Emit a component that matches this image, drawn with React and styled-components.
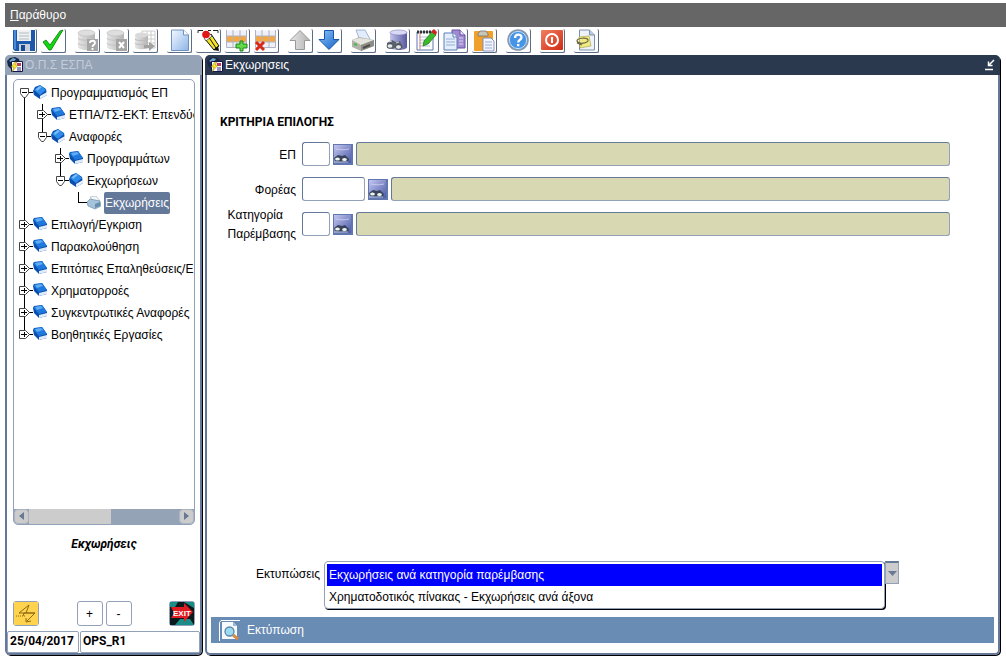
import React, { useState } from 'react';
import styled, { createGlobalStyle, css } from 'styled-components';

const Colors = {
  MENU: '#666666',
  FRAME: '#66789a',
  FRAME_LIGHT: '#92a1b7',
  TITLE: '#2a394e',
  TITLE_INACTIVE: '#95a3b7',
  FIELD: '#d8d9b3',
  ACTIONS: '#698cb4',
  SELECTED: '#64789a',
  BLUE: '#0000ff'
};

const FontSizes = {
  NORMAL: '12px'
};

const boldText = css`
  font-family: Roboto, 'Noto Sans', sans-serif;
  font-weight: bold;
`;

const GlobalStyle = createGlobalStyle`
  * { box-sizing: border-box; }

  body {
    margin: 0;
    background: #fff;
    color: #000;
  }

  body, button, input, select {
    font-family: 'Liberation Sans', Arial, sans-serif;
    font-size: ${FontSizes.NORMAL};
  }
`;

const Page = styled.div`
  display: flex;
  flex-direction: column;
  min-height: 100vh;
  padding: 3px 0 3px 5px;
`;

const MenuBar = styled.nav`
  display: flex;
  align-items: center;
  height: 24px;
  padding: 0 5px;
  background: ${Colors.MENU};
`;

const MenuLink = styled.a`
  color: #fff;
  text-decoration: none;

  &::first-letter { text-decoration: underline; }
`;

const Toolbar = styled.div`
  display: flex;
  gap: 9px;
  height: 28px;
  padding: 2px 7px;
`;

const ToolGroup = styled.div`
  display: flex;
  gap: 4px;
`;

const ToolButton = styled.button`
  display: block;
  width: 25px;
  height: 24px;
  padding: 0;
  border: 1px solid #5b6c85;
  border-width: 0 1px 1px 0;
  border-radius: 2px;
  background: #fff;

  svg { display: block; }
`;

const Desktop = styled.main`
  display: flex;
  flex: 1;
  gap: 3px;
  padding-right: 6px;
`;

const Window = styled.section`
  display: flex;
  flex-direction: column;
  border: 2px solid ${Colors.FRAME};
  border-top-width: 0;
  border-radius: 5px;
  box-shadow: 1px 1px 0 #000;
`;

const SideWindow = styled(Window)`
  width: 197px;
  flex-shrink: 0;
`;

const MainWindow = styled(Window)`
  flex: 1;
  min-width: 0;
`;

const TitleBar = styled.header`
  display: flex;
  align-items: center;
  gap: 1px;
  height: 20px;
  margin: 0 -2px;
  padding: 0 4px 0 2px;
  border-radius: 5px 5px 0 0;
  background: ${({ $active }) => ($active ? Colors.TITLE : Colors.TITLE_INACTIVE)};
  color: ${({ $active }) => ($active ? '#fff' : '#c3ccd7')};
`;

const Title = styled.h1`
  flex: 1;
  margin: 0;
  font-size: ${FontSizes.NORMAL};
  font-weight: normal;
`;

const PlainButton = styled.button`
  padding: 0;
  border: 0;
  background: none;
  line-height: 0;
`;

const SideBody = styled.div`
  display: flex;
  flex-direction: column;
  flex: 1;
  padding: 4px 5px 5px 6px;
`;

const TreeBox = styled.div`
  display: flex;
  flex-direction: column;
  flex: 1;
  border: 1px solid ${Colors.FRAME_LIGHT};
  border-radius: 5px;
  overflow: hidden;
`;

const TreeScroll = styled.div`
  flex: 1;
  padding: 2px 0 0 4px;
  overflow: hidden;
`;

const Branch = styled.ul`
  margin: 0;
  padding: 0;
  list-style: none;

  & & { padding-left: 18px; }
`;

const guides = {
  first: '6px 11px / 1px 100%',
  middle: '6px 0 / 1px 100%',
  last: '6px 0 / 1px 11px'
};

const Node = styled.li`
  background: linear-gradient(#000, #000) ${({ $guide }) => guides[$guide]} no-repeat;
`;

const NodeButton = styled.button`
  display: flex;
  align-items: center;
  height: 22px;
  padding: 0;
  border: 0;
  background: none;
  white-space: nowrap;

  svg { flex-shrink: 0; }
`;

const NodeLabel = styled.span`
  margin-left: 3px;
  padding: 0 1px;
  line-height: 22px;
  ${({ $selected }) => $selected && css`
    border-radius: 2px;
    background: ${Colors.SELECTED};
    color: #fff;
  `}
`;

const ScrollBar = styled.div`
  display: flex;
  height: 15px;
  background: ${Colors.TITLE_INACTIVE};
`;

const ScrollThumb = styled.div`
  width: 82px;
  margin-right: auto;
  background: #cccccc;
`;

const ScrollArrow = styled.button`
  width: 15px;
  padding: 0;
  border: 1px solid #a9b3c1;
  border-radius: 4px;
  background: #cccccc;
  line-height: 0;
`;

const Current = styled.p`
  margin: 10px 0 48px;
  ${boldText}
  line-height: 18px;
  font-style: italic;
  text-align: center;
`;

const SideControls = styled.div`
  display: flex;
  justify-content: space-between;
`;

const StepButtons = styled.div`
  display: flex;
  gap: 3px;
`;

const SideButton = styled.button`
  width: 26px;
  height: 25px;
  padding: 0;
  border: 1px solid ${Colors.FRAME_LIGHT};
  border-radius: 3px;
  background: #fff;

  svg { display: block; }
`;

const StatusBar = styled.footer`
  display: flex;
  gap: 1px;
  height: 22px;
`;

const StatusCell = styled.span`
  flex: ${({ $grow }) => ($grow ? '1' : '0 0 72px')};
  padding-left: 2px;
  border: 1px solid ${Colors.FRAME_LIGHT};
  border-radius: 2px;
  ${boldText}
  line-height: 18px;
  white-space: nowrap;
`;

const Form = styled.form`
  display: flex;
  flex-direction: column;
  flex: 1;
  padding: 38px 4px 10px 4px;
`;

const Heading = styled.h2`
  margin: 0 0 11px 9px;
  ${boldText}
  font-size: ${FontSizes.NORMAL};
  line-height: 18px;
`;

const Fields = styled.div`
  display: flex;
  flex-direction: column;
  gap: 11px;
  padding-right: 44px;
`;

const FieldRow = styled.div`
  display: flex;
  gap: 3px;
  height: 24px;
`;

const FieldLabel = styled.label`
  display: flex;
  align-items: center;
  justify-content: flex-end;
  width: 85px;
  height: 26px;
  margin-right: 3px;
  line-height: 19px;
`;

const TextField = styled.input`
  width: ${({ $width }) => $width || '100%'};
  min-width: 0;
  flex: ${({ $width }) => ($width ? 'none' : '1')};
  height: 24px;
  padding: 0 4px;
  border: 1px solid ${Colors.FRAME_LIGHT};
  border-top-color: ${Colors.FRAME};
  border-left-color: ${Colors.FRAME};
  border-radius: 3px;
  background: ${({ readOnly }) => (readOnly ? Colors.FIELD : '#fff')};
  outline: none;
`;

const LookupButton = styled.button`
  width: 20px;
  height: 21px;
  margin: 2px 0 0;
  padding: 0;
  border: 0;

  svg { display: block; }
`;

const Reports = styled.div`
  display: flex;
  align-items: flex-start;
  margin-top: auto;
  padding-left: 42px;
`;

const ReportsLabel = styled.label`
  width: 67px;
  margin-right: 4px;
  line-height: 26px;
  text-align: right;
`;

const ReportList = styled.select`
  width: 561px;
  height: 48px;
  padding: 2px;
  border: 1px solid ${Colors.FRAME_LIGHT};
  border-radius: 4px;
  box-shadow: 1px 1px 0 #000;
  background: #fff;
  overflow: hidden;
  outline: none;
`;

const ReportOption = styled.option`
  min-height: 22px;
  padding: 4px 2px 0;
  color: #000;

  &:checked {
    background: linear-gradient(${Colors.BLUE}, ${Colors.BLUE});
    -webkit-text-fill-color: #fff;
  }
`;

const DropButton = styled.button`
  width: 14px;
  height: 23px;
  padding: 0;
  border: 1px solid ${Colors.FRAME_LIGHT};
  border-top: 2px solid ${Colors.FRAME};
  background: #cccccc;
  line-height: 0;
`;

const Actions = styled.div`
  display: flex;
  height: 26px;
  margin-top: 8px;
  padding-left: 8px;
  background: ${Colors.ACTIONS};
`;

const PrintButton = styled.button`
  display: flex;
  align-items: center;
  gap: 7px;
  padding: 0;
  border: 0;
  background: none;
  color: #fff;
`;

const Svg = ({ w = 24, h = 23, children }) => (
  <svg width={w} height={h} viewBox={`0 0 ${w} ${h}`} fill='none' aria-hidden='true'>
    {children}
  </svg>
);

const Gradients = () => (
  <svg width='0' height='0' style={{ position: 'absolute' }} aria-hidden='true'>
    <defs>
      <linearGradient id='blue' x1='0' y1='0' x2='1' y2='1'>
        <stop offset='0' stopColor='#8cc4fa' />
        <stop offset='1' stopColor='#1260c4' />
      </linearGradient>
      <linearGradient id='paper' x1='0' y1='0' x2='1' y2='1'>
        <stop offset='0' stopColor='#f4f9ff' />
        <stop offset='1' stopColor='#8db5e8' />
      </linearGradient>
      <linearGradient id='grey' x1='0' y1='0' x2='1' y2='0'>
        <stop offset='0' stopColor='#e6e6e6' />
        <stop offset='1' stopColor='#b4b4b4' />
      </linearGradient>
      <linearGradient id='violet' x1='0' y1='0' x2='1' y2='0'>
        <stop offset='0' stopColor='#c4c4ec' />
        <stop offset='1' stopColor='#5858a0' />
      </linearGradient>
      <linearGradient id='lookup' x1='0' y1='0' x2='1' y2='1'>
        <stop offset='0' stopColor='#c4c6f0' />
        <stop offset='1' stopColor='#4a5aa6' />
      </linearGradient>
      <linearGradient id='red' x1='0' y1='0' x2='1' y2='1'>
        <stop offset='0' stopColor='#f08060' />
        <stop offset='1' stopColor='#d02a14' />
      </linearGradient>
    </defs>
  </svg>
);

const SaveIcon = () => (
  <Svg>
    <path d='M1 1h22v21H3l-2-2z' fill='#1c58ac' />
    <path d='M2 1h2v19H2z' fill='#4b8ad8' />
    <path d='M5 1h14v11H5z' fill='#eef0f2' />
    <path d='M7 4h10M7 7h10M7 10h10' stroke='#b7bcc4' />
    <path d='M7 15h11v7H7z' fill='#c9ced6' />
    <path d='M9 16h4v6H9z' fill='#174a94' />
  </Svg>
);

const CheckIcon = () => (
  <Svg>
    <path d='M2 13l3-2 4 5L19 2l3-1-12 20H8z' fill='#12d612' stroke='#067d06' strokeWidth='.8' />
  </Svg>
);

const Cylinder = () => (
  <>
    <path d='M3 4v14c0 4 17 4 17 0V4z' fill='url(#grey)' />
    <ellipse cx='11.5' cy='4' rx='8.5' ry='3' fill='#dedede' stroke='#bcbcbc' strokeWidth='.6' />
    <path d='M3 9c0 3 17 3 17 0M3 14c0 3 17 3 17 0' stroke='#c2c2c2' />
  </>
);

const QueryIcon = () => (
  <Svg>
    <Cylinder />
    <path d='M12 10h11v12H12z' fill='#a5a5a5' />
    <path d='M15 14c0-3 5-3 5 0 0 2-2.500 1.500-2.500 4M17.500 19v2' stroke='#fff' strokeWidth='1.800' />
  </Svg>
);

const CancelQueryIcon = () => (
  <Svg>
    <Cylinder />
    <path d='M12 10h11v12H12z' fill='#a5a5a5' />
    <path d='M15 13l5 6M20 13l-5 6' stroke='#fff' strokeWidth='2' />
  </Svg>
);

const ExecuteIcon = () => (
  <Svg>
    <path d='M9 2h13v17H9zM9 6h13M9 10h13M9 14h13M14 2v17M18 2v17' stroke='#cccccc' />
    <path d='M2 6v12c0 3 13 3 13 0V6z' fill='url(#grey)' />
    <ellipse cx='8.500' cy='6' rx='6.500' ry='2.500' fill='#dadada' />
    <path d='M2 10c0 2 13 2 13 0M2 14c0 2 13 2 13 0' stroke='#bbb' />
    <path d='M11 16h5v-3l6 4-6 5v-3h-5z' fill='#a2a2a2' />
  </Svg>
);

const NewIcon = () => (
  <Svg>
    <path d='M4.500 1h12l5 5v15.500h-17z' fill='url(#paper)' stroke='#6f92c4' />
    <path d='M16.500 1v5h5' fill='#fff' stroke='#6f92c4' />
  </Svg>
);

const EraseIcon = () => (
  <Svg>
    <path d='M2 4V1.500h5M12 1.500h3M17 1.500h5V4' stroke='#222' />
    <path d='M9 10l6-5 8 12-5 4z' fill='#f5e52a' stroke='#111' />
    <path d='M12 7l8 12' stroke='#111' />
    <path d='M8 9l5-5 3 3-6 5z' fill='#fff' stroke='#111' strokeWidth='.6' />
    <circle cx='10' cy='5.500' r='3.800' fill='#e01818' />
    <path d='M17 21l5-4 1 5z' fill='#111' />
  </Svg>
);

const Grid = () => (
  <>
    <path d='M1.500 1.500h20v17h-20z' fill='#edf0f6' />
    <path d='M2 7h19v6H2z' fill='#f5a840' />
    <path d='M1.500 1v17.500h20V1M8 1v17M15 1v17M1 7h20M1 13h20' stroke='#b2b2c2' />
  </>
);

const AddRowIcon = () => (
  <Svg>
    <Grid />
    <path d='M15 12h3v3h4v4h-4v3h-3v-3h-4v-4h4z' fill='#62d84a' stroke='#1c861a' />
  </Svg>
);

const RemoveRowIcon = () => (
  <Svg>
    <Grid />
    <path d='M2 13l8 8M10 13l-8 8' stroke='#d82818' strokeWidth='3' />
  </Svg>
);

const UpIcon = () => (
  <Svg>
    <path d='M12 1.500l10 10h-5.500v9h-9v-9H2z' fill='url(#grey)' stroke='#999' />
  </Svg>
);

const DownIcon = () => (
  <Svg>
    <path d='M12 20.500l-10-10h5.500v-9h9v9H22z' fill='url(#blue)' stroke='#1756a8' />
  </Svg>
);

const PrinterIcon = () => (
  <Svg>
    <path d='M5 1l9-0 5 9-10 2z' fill='#e2ecfa' stroke='#8ba6cc' strokeWidth='.8' />
    <path d='M1 11l7-3 15 3v6l-13 5-9-4z' fill='#b2b2aa' />
    <path d='M1 11l7-2 15 2-13 5z' fill='#e4e4dc' />
    <path d='M10 16l13-5v6l-13 5z' fill='#8d8d86' />
    <path d='M12 19l7-3' stroke='#4c4c48' strokeWidth='2' />
    <path d='M3 15l3 1' stroke='#44b944' strokeWidth='2' />
  </Svg>
);

const FindIcon = () => (
  <Svg>
    <path d='M5 3v15c0 4 17 4 17 0V3z' fill='url(#violet)' />
    <ellipse cx='13.500' cy='3.500' rx='8.500' ry='2.500' fill='#dadaf6' stroke='#8080bc' strokeWidth='.6' />
    <path d='M2 14l5-3 4 2 4-1 3 6-3 3-4-3-3 2-6-1z' fill='#59626e' />
    <ellipse cx='5' cy='17' rx='3' ry='2.300' fill='#e4eaea' stroke='#30363e' strokeWidth='.8' />
    <ellipse cx='13.500' cy='18' rx='3' ry='2.300' fill='#e4eaea' stroke='#30363e' strokeWidth='.8' />
    <path d='M4 13l3-1M11 14l3-1' stroke='#c9d0d6' />
  </Svg>
);

const EditIcon = () => (
  <Svg>
    <path d='M3 3h16v18H3z' fill='#fff' stroke='#5d78b2' />
    <path d='M5 8h11M5 11h11M5 14h11M5 17h11' stroke='#acc0e2' />
    <path d='M6 4v17' stroke='#e08080' />
    <path d='M3 3h16' stroke='#333' strokeWidth='3' strokeDasharray='2 1' />
    <path d='M9 17l1-5 8-9 4 3-8 9z' fill='#3cb828' stroke='#18720e' strokeWidth='.7' />
    <path d='M17 3l3-3 3 3-1 3z' fill='#d42222' />
  </Svg>
);

const CopyIcon = () => (
  <Svg>
    <path d='M9 1h8l5 5v13H9z' fill='#a08bd0' stroke='#6350a0' />
    <path d='M17 1v5h5' fill='#e6def8' stroke='#6350a0' />
    <path d='M1 4h9l4 4v13H1z' fill='#e5eefb' stroke='#5c7cb6' />
    <path d='M10 4v4h4' fill='#fff' stroke='#5c7cb6' />
    <path d='M3 10h9M3 13h9M3 16h9' stroke='#94aed6' />
    <path d='M16 9h4M16 12h4M16 15h4' stroke='#dcd3f2' />
  </Svg>
);

const PasteIcon = () => (
  <Svg>
    <rect x='2' y='2' width='19' height='20' rx='1' fill='#f2a02c' />
    <path d='M6 5l2-3h6l2 3v2H6z' fill='#c6c6ba' stroke='#74746a' strokeWidth='.8' />
    <path d='M11 9h8l3 3v10H11z' fill='#f0f4ff' stroke='#7082ae' strokeWidth='.8' />
    <path d='M13 13h7M13 16h7M13 19h7' stroke='#9daccf' />
  </Svg>
);

const HelpIcon = () => (
  <Svg>
    <circle cx='12' cy='11' r='10' fill='#4594e6' stroke='#8a98aa' strokeWidth='1.600' />
    <circle cx='12' cy='11' r='8.600' stroke='#c5e0fa' />
    <path d='M9 9c0-4.500 6.500-4.500 6.500-.5 0 2.500-3.300 2-3.300 5M12.200 15v2.300' stroke='#fff' strokeWidth='2.300' />
  </Svg>
);

const PowerIcon = () => (
  <Svg>
    <rect x='1' y='1' width='22' height='20' rx='1' fill='url(#red)' />
    <circle cx='12' cy='11' r='6' stroke='#fff' strokeWidth='2' />
    <path d='M12 8v6' stroke='#fff' strokeWidth='2' />
  </Svg>
);

const AttachIcon = () => (
  <Svg>
    <path d='M5.500 1h10l5 5v15h-15z' fill='#eef3fb' stroke='#7f90ad' />
    <path d='M15.500 1v5h5' fill='#b7cbe8' stroke='#7f90ad' />
    <path d='M5 8l10-1 2 10-11 2z' fill='#f0ea86' stroke='#a59c36' strokeWidth='.6' />
    <path d='M3 12c0-3 10-4 11-1s-10 5-11 1M3 14l5 2' stroke='#6b6840' strokeWidth='1.200' />
  </Svg>
);

const AppIcon = () => (
  <Svg w={17} h={16}>
    <path d='M0 4l3-3 5-1 4 2 1 5-8 6-4-4z' fill='#18284a' />
    <path d='M2 4l4-3 3 1-3 4z' fill='#72a5c8' />
    <path d='M4.500 4.500h11v10h-11z' fill='#fff' stroke='#151545' />
    <path d='M10 6h4v3h-4z' fill='#c43a66' />
    <path d='M10 11h4M10 13h4' stroke='#2b2b80' />
    <path d='M8 5l-4 5h3l-2 5 6-7H8l2-3z' fill='#ffe928' stroke='#6c5b00' strokeWidth='.4' />
  </Svg>
);

const RestoreIcon = () => (
  <Svg w={12} h={12}>
    <path d='M1 10.500h8' stroke='#fff' strokeWidth='1.500' />
    <path d='M10 1L5 6M4.500 2.500v4h4' stroke='#fff' strokeWidth='1.500' />
  </Svg>
);

const Handle = ({ open }) => (
  <Svg w={15} h={22}>
    <path d='M10 10.500h5' stroke='#000' />
    <path
      d={open ? 'M2.500 6.500h8v5l-3 4h-2l-3-4z' : 'M1.500 6.500h6l4 4-4 4h-6z'}
      fill='#fff'
      stroke='#444'
    />
    <path d={open ? 'M4 10.500h5' : 'M3 10.500h6M6.500 8v5'} stroke='#000' />
  </Svg>
);

const LeafLine = () => (
  <Svg w={15} h={22}>
    <path d='M6 10.500h9' stroke='#000' />
  </Svg>
);

const BookIcon = ({ open }) => (
  <Svg w={14} h={16}>
    {open ? (
      <>
        <path d='M0 6l2-4 5-2 6 4 1 6-7 4-6-4z' fill='#0b4fae' />
        <path d='M1 5l6-5 6 5-6 5z' fill='#2f8cea' />
        <path d='M3 4l4-3 2 1-5 4z' fill='#7cbcf8' />
        <path d='M7 11l7-4v3l-7 4z' fill='#e8f1fb' />
      </>
    ) : (
      <>
        <path d='M0 3l1-2 8-1 5 7v4l-8 2-5-5z' fill='#0b4fae' />
        <path d='M0 2l9-2 5 7-8 2z' fill='#1f78dc' />
        <path d='M2 2l6-1 2 2-6 2z' fill='#5fabf4' />
        <path d='M6 10l8-2v3l-8 2z' fill='#dfeafa' />
      </>
    )}
  </Svg>
);

const ReportIcon = () => (
  <Svg w={14} h={14}>
    <path d='M3 1l6-1 4 5-6 2z' fill='#f4f8fc' stroke='#9aacbd' strokeWidth='.6' />
    <path d='M0 6l3-3 10 2 1 5-6 3-7-3z' fill='#a6c3dc' stroke='#64829c' strokeWidth='.6' />
    <path d='M8 8l5-2v4l-5 2z' fill='#668cae' />
  </Svg>
);

const LookupIcon = () => (
  <Svg w={20} h={21}>
    <path d='M0 0h20v21H0z' fill='#6277b0' />
    <path d='M1 1h17v18H1z' fill='url(#lookup)' />
    <path d='M3 5c3 1 9 1 13 0' stroke='#d2d4f6' strokeWidth='.8' />
    <path d='M1 14l4-3 4 1 3-1 4 4-1 3-4-1-3 1-6-1z' fill='#39445c' />
    <ellipse cx='4.500' cy='15' rx='2.400' ry='1.600' fill='#eef4ee' />
    <ellipse cx='11.500' cy='15.500' rx='2.400' ry='1.600' fill='#eef4ee' />
    <path d='M1 18h14' stroke='#a8b8d0' />
  </Svg>
);

const Arrow = ({ d }) => (
  <Svg w={9} h={9}>
    <path d={d} fill='#697994' />
  </Svg>
);

const BoltIcon = () => (
  <Svg>
    <path d='M0 0h24v23H0z' fill='#ffd34e' />
    <path d='M15 3L5 11h16l-8 8M15 3l-3 8M21 11H10l-1 3' stroke='#8d6a12' />
    <path d='M2 14h9' stroke='#8d6a12' strokeDasharray='1 1' />
    <path d='M12 16v4l5-1' stroke='#8d6a12' />
  </Svg>
);

const ExitIcon = () => (
  <Svg>
    <path d='M0 0h24v23H0z' fill='#0c1a1c' />
    <path d='M0 0h8l-3 5H0zM14 0h10v6zM5 23l5-6h10l4 6z' fill='#1c8c86' />
    <path d='M1 5h13V1l9 9-9 10v-4H1l3-5z' fill='#e01c22' />
    <text x='3' y='14' fill='#fff' fontSize='8' fontWeight='bold' fontFamily='Liberation Sans'>EXIT</text>
  </Svg>
);

const PreviewIcon = () => (
  <Svg w={21} h={21}>
    <path d='M.5 21V2.500L2 .5h19' stroke='#fff' />
    <path d='M3 2h11l4 4v13H3z' fill='#f6fafd' />
    <path d='M14 2v4h4z' fill='#9cb8d8' />
    <path d='M14 15l5 4' stroke='#d88a48' strokeWidth='3' />
    <circle cx='10.500' cy='11.500' r='4.500' fill='#9bdaf0' stroke='#5a87a8' strokeWidth='1.300' />
  </Svg>
);

const toolGroups = [
  [['Αποθήκευση', SaveIcon], ['Αποδοχή', CheckIcon]],
  [['Ερώτηση', QueryIcon], ['Ακύρωση ερώτησης', CancelQueryIcon], ['Εκτέλεση', ExecuteIcon]],
  [['Νέο', NewIcon], ['Καθαρισμός', EraseIcon], ['Εισαγωγή εγγραφής', AddRowIcon], ['Διαγραφή εγγραφής', RemoveRowIcon]],
  [['Προηγούμενο', UpIcon], ['Επόμενο', DownIcon]],
  [['Εκτυπωτής', PrinterIcon]],
  [['Αναζήτηση', FindIcon], ['Επεξεργασία', EditIcon], ['Αντιγραφή', CopyIcon], ['Επικόλληση', PasteIcon]],
  [['Βοήθεια', HelpIcon]],
  [['Έξοδος', PowerIcon]],
  [['Συνημμένα', AttachIcon]]
];

const tree = [
  {
    label: 'Προγραμματισμός ΕΠ',
    children: [
      { label: 'ΕΤΠΑ/ΤΣ-ΕΚΤ: Επενδύσεις' },
      {
        label: 'Αναφορές',
        children: [
          { label: 'Προγραμμάτων' },
          { label: 'Εκχωρήσεων', children: [{ label: 'Εκχωρήσεις', leaf: true }] }
        ]
      }
    ]
  },
  { label: 'Επιλογή/Εγκριση' },
  { label: 'Παρακολούθηση' },
  { label: 'Επιτόπιες Επαληθεύσεις/Ε' },
  { label: 'Χρηματορροές' },
  { label: 'Συγκεντρωτικές Αναφορές' },
  { label: 'Βοηθητικές Εργασίες' }
];

const fields = [
  { id: 'ep', label: 'ΕΠ', width: '28px' },
  { id: 'foreas', label: 'Φορέας', width: '63px' },
  { id: 'katigoria', label: <>Κατηγορία<br />Παρέμβασης</>, width: '28px' }
];

const reports = [
  'Εκχωρήσεις ανά κατηγορία παρέμβασης',
  'Χρηματοδοτικός πίνακας - Εκχωρήσεις ανά άξονα'
];

const getGuide = (index, count, root) => {
  if (index === count - 1) return 'last';
  return root && index === 0 ? 'first' : 'middle';
};

const Tree = ({ nodes, root }) => (
  <Branch>
    {nodes.map(({ label, children, leaf }, index) => (
      <Node key={label} $guide={getGuide(index, nodes.length, root)}>
        <NodeButton type='button'>
          {leaf ? <LeafLine /> : <Handle open={!!children} />}
          {leaf ? <ReportIcon /> : <BookIcon open={!!children} />}
          <NodeLabel $selected={leaf}>{label}</NodeLabel>
        </NodeButton>
        {children && <Tree nodes={children} />}
      </Node>
    ))}
  </Branch>
);

const Navigator = () => (
  <SideWindow>
    <TitleBar>
      <AppIcon />
      <Title>Ο.Π.Σ ΕΣΠΑ</Title>
    </TitleBar>
    <SideBody>
      <TreeBox>
        <TreeScroll><Tree nodes={tree} root /></TreeScroll>
        <ScrollBar>
          <ScrollArrow aria-label='Αριστερά'><Arrow d='M7 0v8L2 4z' /></ScrollArrow>
          <ScrollThumb />
          <ScrollArrow aria-label='Δεξιά'><Arrow d='M2 0v8l5-4z' /></ScrollArrow>
        </ScrollBar>
      </TreeBox>
      <Current>Εκχωρήσεις</Current>
      <SideControls>
        <SideButton aria-label='Εκτέλεση'><BoltIcon /></SideButton>
        <StepButtons>
          <SideButton>+</SideButton>
          <SideButton>-</SideButton>
        </StepButtons>
        <SideButton aria-label='Έξοδος'><ExitIcon /></SideButton>
      </SideControls>
    </SideBody>
    <StatusBar>
      <StatusCell>25/04/2017</StatusCell>
      <StatusCell $grow>OPS_R1</StatusCell>
    </StatusBar>
  </SideWindow>
);

const Assignments = () => {
  const [report, setReport] = useState(reports[0]);

  return (
    <MainWindow>
      <TitleBar $active>
        <AppIcon />
        <Title>Εκχωρησεις</Title>
        <PlainButton aria-label='Επαναφορά'><RestoreIcon /></PlainButton>
      </TitleBar>
      <Form>
        <Heading>ΚΡΙΤΗΡΙΑ ΕΠΙΛΟΓΗΣ</Heading>
        <Fields>
          {fields.map(({ id, label, width }) => (
            <FieldRow key={id}>
              <FieldLabel id={`${id}-label`} htmlFor={id}><span>{label}</span></FieldLabel>
              <TextField id={id} $width={width} />
              <LookupButton type='button' aria-label='Αναζήτηση'><LookupIcon /></LookupButton>
              <TextField readOnly aria-labelledby={`${id}-label`} />
            </FieldRow>
          ))}
        </Fields>
        <Reports>
          <ReportsLabel htmlFor='reports'>Εκτυπώσεις</ReportsLabel>
          <ReportList id='reports' size={2} value={report} onChange={e => setReport(e.target.value)}>
            {reports.map(name => <ReportOption key={name}>{name}</ReportOption>)}
          </ReportList>
          <DropButton type='button' aria-label='Άνοιγμα λίστας'><Arrow d='M0 2h9L4.500 7z' /></DropButton>
        </Reports>
        <Actions>
          <PrintButton type='button'><PreviewIcon />Εκτύπωση</PrintButton>
        </Actions>
      </Form>
    </MainWindow>
  );
};

export default function App() {
  return (
    <Page>
      <GlobalStyle />
      <Gradients />
      <MenuBar><MenuLink href='#window'>Παράθυρο</MenuLink></MenuBar>
      <Toolbar>
        {toolGroups.map((group, index) => (
          <ToolGroup key={index}>
            {group.map(([label, Icon]) => (
              <ToolButton key={label} aria-label={label}><Icon /></ToolButton>
            ))}
          </ToolGroup>
        ))}
      </Toolbar>
      <Desktop>
        <Navigator />
        <Assignments />
      </Desktop>
    </Page>
  );
}
